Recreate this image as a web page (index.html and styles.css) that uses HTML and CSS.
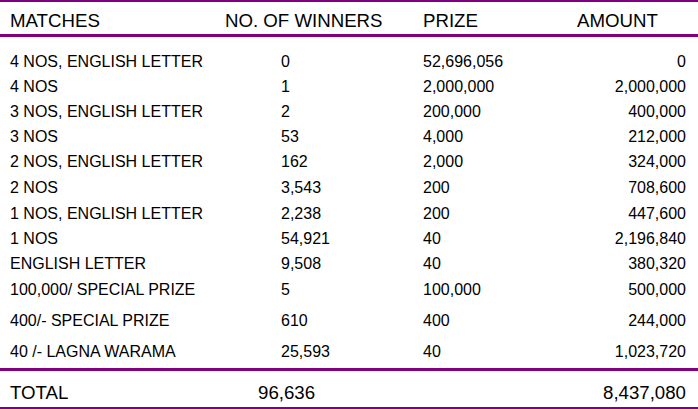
FILE: index.html
```html
<!DOCTYPE html>
<html>
<head>
<meta charset="utf-8">
<link rel="stylesheet" href="styles.css">
</head>
<body>
<div class="results">
  <div class="row head">
    <div class="c1">MATCHES</div>
    <div class="c2">NO. OF WINNERS</div>
    <div class="c3">PRIZE</div>
    <div class="c4">AMOUNT</div>
  </div>
  <div class="rows">
    <div class="row item"><div class="c1">4 NOS, ENGLISH LETTER</div><div class="c2">0</div><div class="c3">52,696,056</div><div class="c4">0</div></div>
    <div class="row item"><div class="c1">4 NOS</div><div class="c2">1</div><div class="c3">2,000,000</div><div class="c4">2,000,000</div></div>
    <div class="row item"><div class="c1">3 NOS, ENGLISH LETTER</div><div class="c2">2</div><div class="c3">200,000</div><div class="c4">400,000</div></div>
    <div class="row item"><div class="c1">3 NOS</div><div class="c2">53</div><div class="c3">4,000</div><div class="c4">212,000</div></div>
    <div class="row item h26"><div class="c1">2 NOS, ENGLISH LETTER</div><div class="c2">162</div><div class="c3">2,000</div><div class="c4">324,000</div></div>
    <div class="row item h26"><div class="c1">2 NOS</div><div class="c2">3,543</div><div class="c3">200</div><div class="c4">708,600</div></div>
    <div class="row item"><div class="c1">1 NOS, ENGLISH LETTER</div><div class="c2">2,238</div><div class="c3">200</div><div class="c4">447,600</div></div>
    <div class="row item"><div class="c1">1 NOS</div><div class="c2">54,921</div><div class="c3">40</div><div class="c4">2,196,840</div></div>
    <div class="row item h26"><div class="c1">ENGLISH LETTER</div><div class="c2">9,508</div><div class="c3">40</div><div class="c4">380,320</div></div>
    <div class="row item h31"><div class="c1">100,000/ SPECIAL PRIZE</div><div class="c2">5</div><div class="c3">100,000</div><div class="c4">500,000</div></div>
    <div class="row item h31"><div class="c1">400/- SPECIAL PRIZE</div><div class="c2">610</div><div class="c3">400</div><div class="c4">244,000</div></div>
    <div class="row item h29"><div class="c1">40 /- LAGNA WARAMA</div><div class="c2">25,593</div><div class="c3">40</div><div class="c4">1,023,720</div></div>
  </div>
  <div class="row total">
    <div class="c1">TOTAL</div>
    <div class="c2">96,636</div>
    <div class="c3"></div>
    <div class="c4">8,437,080</div>
  </div>
</div>
</body>
</html>
```
FILE: styles.css
```css
html, body {
  margin: 0;
  padding: 0;
  background: #ffffff;
}
body {
  width: 698px;
  height: 409px;
  overflow: hidden;
  font-family: "Liberation Sans", Arial, sans-serif;
  color: #000000;
}
.results {
  width: 698px;
}
.row {
  display: grid;
  grid-template-columns: 225px 198px 154px 1fr;
  box-sizing: border-box;
  white-space: nowrap;
}
.c1 {
  padding-left: 10px;
}
.c4 {
  padding-right: 12px;
}
.head {
  border-top: 2px solid #800080;
  border-bottom: 3px solid #800080;
  height: 37px;
  padding-top: 8px;
  font-size: 18.67px;
  line-height: 21px;
}
.head .c4 {
  padding-right: 0;
}
.rows {
  padding-top: 12px;
}
.item {
  height: 25px;
  font-size: 16px;
  line-height: 25px;
  align-items: start;
}
.item.h26 { height: 26px; }
.item.h31 { height: 31px; }
.item.h29 { height: 29px; }
.item .c2 {
  padding-left: 56px;
}
.item .c4 {
  text-align: right;
}
.total {
  border-top: 3px solid #800080;
  border-bottom: 2px solid #800080;
  height: 41px;
  padding-top: 11px;
  font-size: 18.67px;
  line-height: 21px;
}
.total .c2 {
  padding-left: 33px;
}
.total .c4 {
  text-align: right;
}
```
